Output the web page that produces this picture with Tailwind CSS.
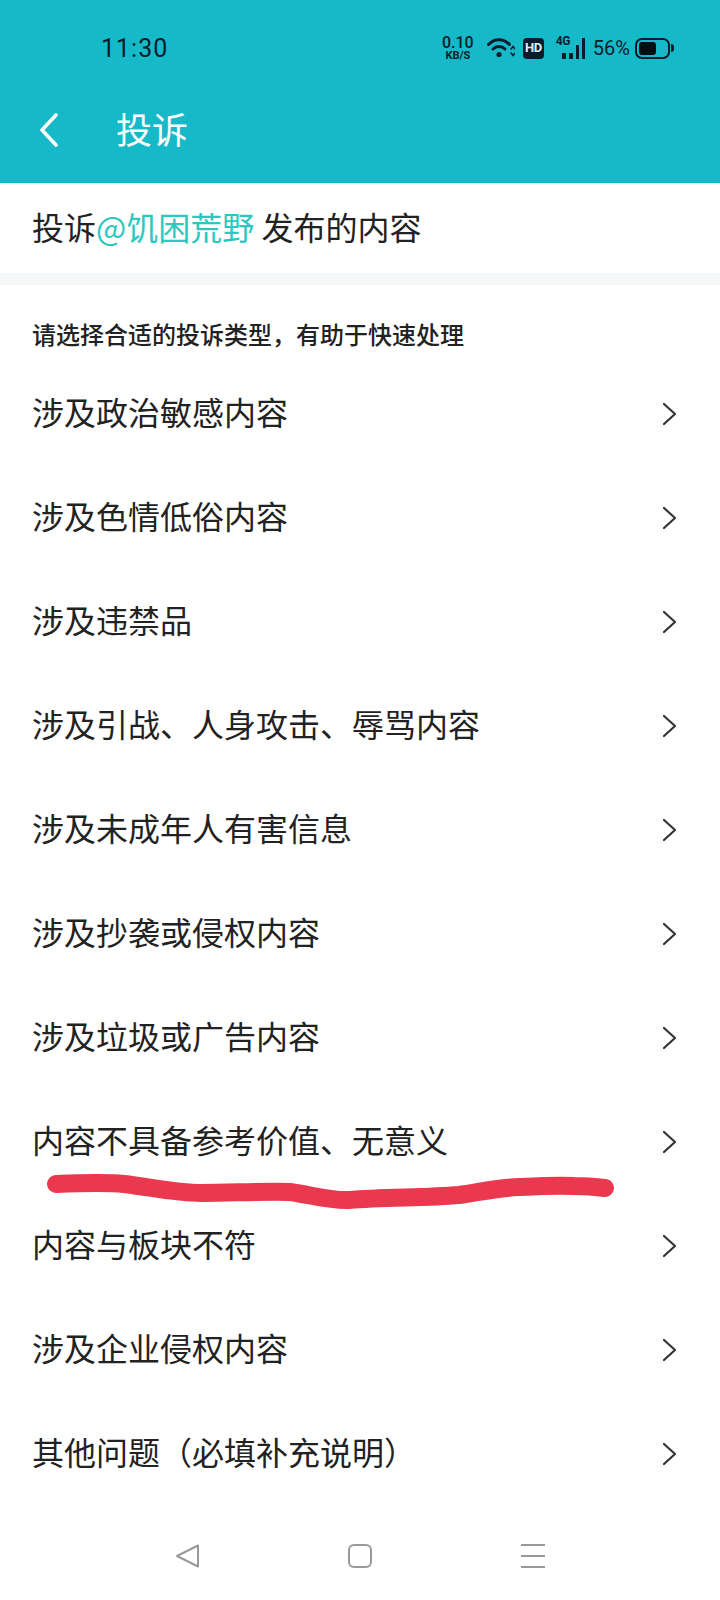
<!DOCTYPE html>
<html lang="zh-CN">
<head>
  <meta charset="UTF-8">
  <meta name="viewport" content="width=device-width, initial-scale=1.0">
  <title>投诉</title>
  <script src="https://cdn.jsdelivr.net/npm/@tailwindcss/browser@4"></script>
</head>
<body class="relative w-[720px] h-[1600px] overflow-hidden bg-white font-['Noto_Sans_CJK_SC','Noto_Sans',sans-serif] text-[#222]">
  <!-- Status bar + toolbar -->
  <header class="h-[183px] bg-[#15b9c8]">
    <div class="h-[96px] flex items-center pl-[101px] pr-[46px] text-[#0a1c2b] font-['Roboto',sans-serif]">
      <span class="text-[25px] tracking-[1px] pt-[2px]">11:30</span>
      <div class="ml-auto flex items-center">
        <div class="w-[32px] flex flex-col items-center font-medium leading-none">
          <span class="text-[16px] leading-[14px]">0.10</span>
          <span class="text-[11px] leading-[11px] font-bold">KB/S</span>
        </div>
        <svg class="ml-[13px]" width="28" height="22" viewBox="0 0 28 22" fill="none" stroke="#0a1c2b" stroke-width="3" stroke-linecap="round">
          <path d="M1.5 7.5C7.5 1 16.5 1 22.5 7.5"/>
          <path d="M6 12C9.5 8.5 14.5 8.5 18 12"/>
          <circle cx="12" cy="17.5" r="2.6" fill="#0a1c2b" stroke="none"/>
          <path d="M24 12l2-2.5l2 2.5M24 16l2 2.5l2-2.5" stroke-width="1.5"/>
        </svg>
        <div class="ml-[8px] w-[21px] h-[21px] rounded-[4px] bg-[#0a1c2b] text-[#d8f3f6] text-[13px] tracking-[-0.5px] font-bold flex items-center justify-center">HD</div>
        <div class="ml-[12px] relative w-[29px] h-[22px] flex items-end gap-[3px] justify-end">
          <span class="absolute left-0 top-[-2px] text-[12px] font-bold leading-none tracking-[-0.5px]">4G</span>
          <span class="w-[4px] h-[6px] bg-[#0a1c2b]"></span>
          <span class="w-[4px] h-[6px] bg-[#0a1c2b]"></span>
          <span class="w-[3px] h-[14px] bg-[#0a1c2b]"></span>
          <span class="w-[3px] h-[21px] bg-[#0a1c2b]"></span>
        </div>
        <span class="ml-[8px] text-[20px] leading-none">56%</span>
        <div class="ml-[5px] flex items-center">
          <div class="w-[35px] h-[21px] rounded-[7px] border-[2.5px] border-[#0a1c2b] p-[2px]">
            <div class="w-[17px] h-full rounded-[3px] bg-[#050d14]"></div>
          </div>
          <span class="ml-[1px] w-[3px] h-[8px] rounded-r bg-[#0a1c2b]"></span>
        </div>
      </div>
    </div>
    <div class="h-[68px] flex items-center pl-[39px]">
      <svg width="20" height="34" viewBox="0 0 20 34" fill="none" stroke="#fff" stroke-width="3.6" stroke-linecap="round" stroke-linejoin="round">
        <path d="M17 2L3 17l14 15"/>
      </svg>
      <h1 class="ml-[57px] pb-[4px] text-[36px] text-white leading-none">投诉</h1>
    </div>
  </header>

  <div class="h-[90px] flex items-center px-[32px] pb-[4px] text-[32px] leading-none">
    <span>投诉<span class="text-[#2bc8c0]">@饥困荒野</span> 发布的内容</span>
  </div>
  <div class="h-[12px] bg-[#f5f7f9]"></div>

  <p class="h-[76px] pt-[34px] px-[32px] text-[24px] leading-[30px] font-medium">请选择合适的投诉类型，有助于快速处理</p>

  <!-- Complaint types -->
  <ul class="text-[32px] leading-none">
    <li class="h-[104px] pl-[32px] pr-[43px] flex items-center justify-between">
      <span class="pb-[4px]">涉及政治敏感内容</span>
      <svg class="mt-[1px]" width="15" height="24" viewBox="0 0 15 24" fill="none" stroke="#333" stroke-width="2.2" stroke-linecap="round" stroke-linejoin="round"><path d="M2 2l11 10L2 22"/></svg>
    </li>
    <li class="h-[104px] pl-[32px] pr-[43px] flex items-center justify-between">
      <span class="pb-[4px]">涉及色情低俗内容</span>
      <svg class="mt-[1px]" width="15" height="24" viewBox="0 0 15 24" fill="none" stroke="#333" stroke-width="2.2" stroke-linecap="round" stroke-linejoin="round"><path d="M2 2l11 10L2 22"/></svg>
    </li>
    <li class="h-[104px] pl-[32px] pr-[43px] flex items-center justify-between">
      <span class="pb-[4px]">涉及违禁品</span>
      <svg class="mt-[1px]" width="15" height="24" viewBox="0 0 15 24" fill="none" stroke="#333" stroke-width="2.2" stroke-linecap="round" stroke-linejoin="round"><path d="M2 2l11 10L2 22"/></svg>
    </li>
    <li class="h-[104px] pl-[32px] pr-[43px] flex items-center justify-between">
      <span class="pb-[4px]">涉及引战、人身攻击、辱骂内容</span>
      <svg class="mt-[1px]" width="15" height="24" viewBox="0 0 15 24" fill="none" stroke="#333" stroke-width="2.2" stroke-linecap="round" stroke-linejoin="round"><path d="M2 2l11 10L2 22"/></svg>
    </li>
    <li class="h-[104px] pl-[32px] pr-[43px] flex items-center justify-between">
      <span class="pb-[4px]">涉及未成年人有害信息</span>
      <svg class="mt-[1px]" width="15" height="24" viewBox="0 0 15 24" fill="none" stroke="#333" stroke-width="2.2" stroke-linecap="round" stroke-linejoin="round"><path d="M2 2l11 10L2 22"/></svg>
    </li>
    <li class="h-[104px] pl-[32px] pr-[43px] flex items-center justify-between">
      <span class="pb-[4px]">涉及抄袭或侵权内容</span>
      <svg class="mt-[1px]" width="15" height="24" viewBox="0 0 15 24" fill="none" stroke="#333" stroke-width="2.2" stroke-linecap="round" stroke-linejoin="round"><path d="M2 2l11 10L2 22"/></svg>
    </li>
    <li class="h-[104px] pl-[32px] pr-[43px] flex items-center justify-between">
      <span class="pb-[4px]">涉及垃圾或广告内容</span>
      <svg class="mt-[1px]" width="15" height="24" viewBox="0 0 15 24" fill="none" stroke="#333" stroke-width="2.2" stroke-linecap="round" stroke-linejoin="round"><path d="M2 2l11 10L2 22"/></svg>
    </li>
    <li class="h-[104px] pl-[32px] pr-[43px] flex items-center justify-between">
      <span class="pb-[4px]">内容不具备参考价值、无意义</span>
      <svg class="mt-[1px]" width="15" height="24" viewBox="0 0 15 24" fill="none" stroke="#333" stroke-width="2.2" stroke-linecap="round" stroke-linejoin="round"><path d="M2 2l11 10L2 22"/></svg>
    </li>
    <li class="h-[104px] pl-[32px] pr-[43px] flex items-center justify-between">
      <span class="pb-[4px]">内容与板块不符</span>
      <svg class="mt-[1px]" width="15" height="24" viewBox="0 0 15 24" fill="none" stroke="#333" stroke-width="2.2" stroke-linecap="round" stroke-linejoin="round"><path d="M2 2l11 10L2 22"/></svg>
    </li>
    <li class="h-[104px] pl-[32px] pr-[43px] flex items-center justify-between">
      <span class="pb-[4px]">涉及企业侵权内容</span>
      <svg class="mt-[1px]" width="15" height="24" viewBox="0 0 15 24" fill="none" stroke="#333" stroke-width="2.2" stroke-linecap="round" stroke-linejoin="round"><path d="M2 2l11 10L2 22"/></svg>
    </li>
    <li class="h-[104px] pl-[32px] pr-[43px] flex items-center justify-between">
      <span class="pb-[4px]">其他问题（必填补充说明）</span>
      <svg class="mt-[1px]" width="15" height="24" viewBox="0 0 15 24" fill="none" stroke="#333" stroke-width="2.2" stroke-linecap="round" stroke-linejoin="round"><path d="M2 2l11 10L2 22"/></svg>
    </li>
  </ul>

  <!-- Navigation bar -->
  <nav class="h-[95px] grid grid-cols-3 items-start pt-[38px] w-[519px] mx-auto">
    <svg class="justify-self-center ml-[2px]" width="26" height="26" viewBox="0 0 26 26" fill="none" stroke="#999" stroke-width="2" stroke-linejoin="round"><path d="M23 2.5v21L2 13z"/></svg>
    <svg class="justify-self-center" width="26" height="26" viewBox="0 0 26 26" fill="none" stroke="#999" stroke-width="2"><rect x="2" y="2" width="22" height="22" rx="5"/></svg>
    <svg class="justify-self-center" width="24" height="26" viewBox="0 0 24 26" fill="none" stroke="#999" stroke-width="2"><path d="M0 2h24M0 13h24M0 24h24"/></svg>
  </nav>

  <!-- Red marker stroke drawn over the list -->
  <svg class="absolute left-0 top-[1160px]" width="720" height="60" viewBox="0 0 720 60" fill="none" stroke="#ea384f" stroke-width="18" stroke-linecap="round" stroke-linejoin="round">
    <path d="M56 24C80 23 105 22 124 24C150 27 175 33 202 33C232 33 262 31 290 32C312 35 330 41 349 40C385 37 425 38 459 35C480 32 497 28 519 27C540 26 560 25 574 26C585 26 597 27 605 28"/>
  </svg>
</body>
</html>
